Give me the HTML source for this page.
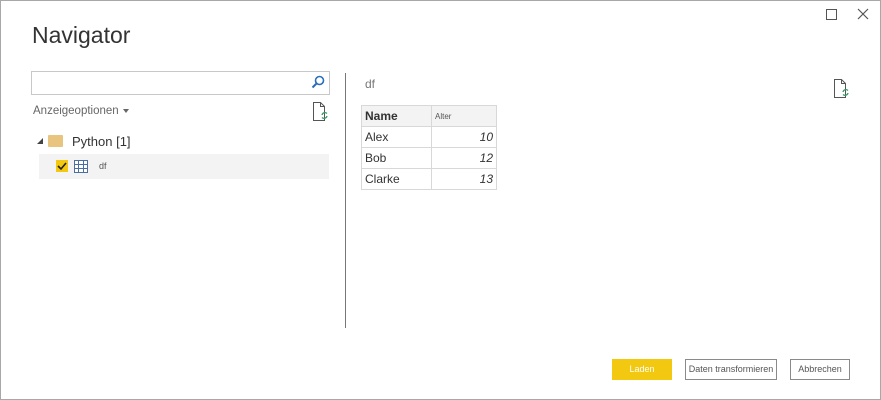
<!DOCTYPE html>
<html><head><style>
body{margin:0;width:881px;height:400px;overflow:hidden;background:#fff;font-family:"Liberation Sans",sans-serif;position:relative}
.win{position:absolute;left:0;top:0;width:879px;height:398px;border:1px solid #a8a8a8}
.a{position:absolute}
td{border:1px solid #d8d8d8;height:20px;padding:0 3px;font-size:12px;color:#333}
table{border-collapse:collapse;position:absolute;left:361px;top:105px}
.btn{position:absolute;top:359px;height:21px;box-sizing:border-box;border:1px solid #8a8a8a;font-size:9px;color:#555;text-align:center;line-height:19px}
</style></head><body>
<div class="win"></div>
<div class="a" style="left:32px;top:22px;font-size:23px;color:#333">Navigator</div>
<div class="a" style="left:826px;top:9px;width:9px;height:9px;border:1px solid #555"></div>
<svg class="a" style="left:857px;top:8px" width="12" height="12"><path d="M1 1L11 11M11 1L1 11" stroke="#555" stroke-width="1.2"/></svg>
<div class="a" style="left:31px;top:71px;width:297px;height:22px;border:1px solid #c8c8c8"></div>
<svg class="a" style="left:311px;top:75px" width="14" height="14"><circle cx="8.5" cy="5.5" r="4" fill="none" stroke="#2a6ebb" stroke-width="1.6"/><path d="M5.5 8.5L1.5 12.5" stroke="#2a6ebb" stroke-width="2"/></svg>
<div class="a" style="left:33px;top:105px;font-size:11.5px;color:#666">Anzeigeoptionen</div>
<div class="a" style="left:123px;top:109px;border-left:3px solid transparent;border-right:3px solid transparent;border-top:4px solid #666"></div>
<svg class="a" style="left:312px;top:102px" width="18" height="20"><path d="M1.5 .5h7l4 4v14h-11z M8.5 .5v4h4" fill="none" stroke="#555"/><path d="M10 13a3 3 0 0 1 5-1.5M15 14a3 3 0 0 1-5 1.5" fill="none" stroke="#3a9a6a" stroke-width="1.3"/></svg>
<div class="a" style="left:37px;top:138px;border-left:6px solid transparent;border-bottom:6px solid #444"></div>
<div class="a" style="left:48px;top:135px;width:15px;height:12px;background:#e8c47e;border-radius:1px"></div>
<div class="a" style="left:72px;top:134px;font-size:13px;color:#333">Python [1]</div>
<div class="a" style="left:39px;top:154px;width:290px;height:25px;background:#f3f3f3"></div>
<div class="a" style="left:56px;top:160px;width:12px;height:12px;background:#f2c811"></div>
<svg class="a" style="left:56px;top:160px" width="12" height="12"><path d="M2 6l3 3 5-6" fill="none" stroke="#222" stroke-width="1.6"/></svg>
<svg class="a" style="left:74px;top:160px" width="14" height="13"><rect x=".5" y=".5" width="13" height="12" fill="#fff" stroke="#4a6fa0"/><path d="M.5 4.5h13M.5 8.5h13M4.5 .5v12M9.5 .5v12" stroke="#4a6fa0"/></svg>
<div class="a" style="left:99px;top:161px;font-size:9px;color:#555">df</div>
<div class="a" style="left:345px;top:73px;width:1px;height:255px;background:#777"></div>
<div class="a" style="left:365px;top:77px;font-size:12px;color:#777">df</div>
<svg class="a" style="left:833px;top:79px" width="18" height="20"><path d="M1.5 .5h7l4 4v14h-11z M8.5 .5v4h4" fill="none" stroke="#555"/><path d="M10 13a3 3 0 0 1 5-1.5M15 14a3 3 0 0 1-5 1.5" fill="none" stroke="#3a9a6a" stroke-width="1.3"/></svg>
<table>
<tr style="background:#f3f3f3"><td style="width:63px;font-weight:bold">Name</td><td style="width:58px;font-size:8px;color:#555">Alter</td></tr>
<tr><td>Alex</td><td style="text-align:right;font-style:italic">10</td></tr>
<tr><td>Bob</td><td style="text-align:right;font-style:italic">12</td></tr>
<tr><td>Clarke</td><td style="text-align:right;font-style:italic">13</td></tr>
</table>
<div class="btn" style="left:612px;width:60px;background:#f2c811;border:none;color:#fff;line-height:21px">Laden</div>
<div class="btn" style="left:685px;width:92px">Daten transformieren</div>
<div class="btn" style="left:790px;width:60px">Abbrechen</div>
</body></html>
